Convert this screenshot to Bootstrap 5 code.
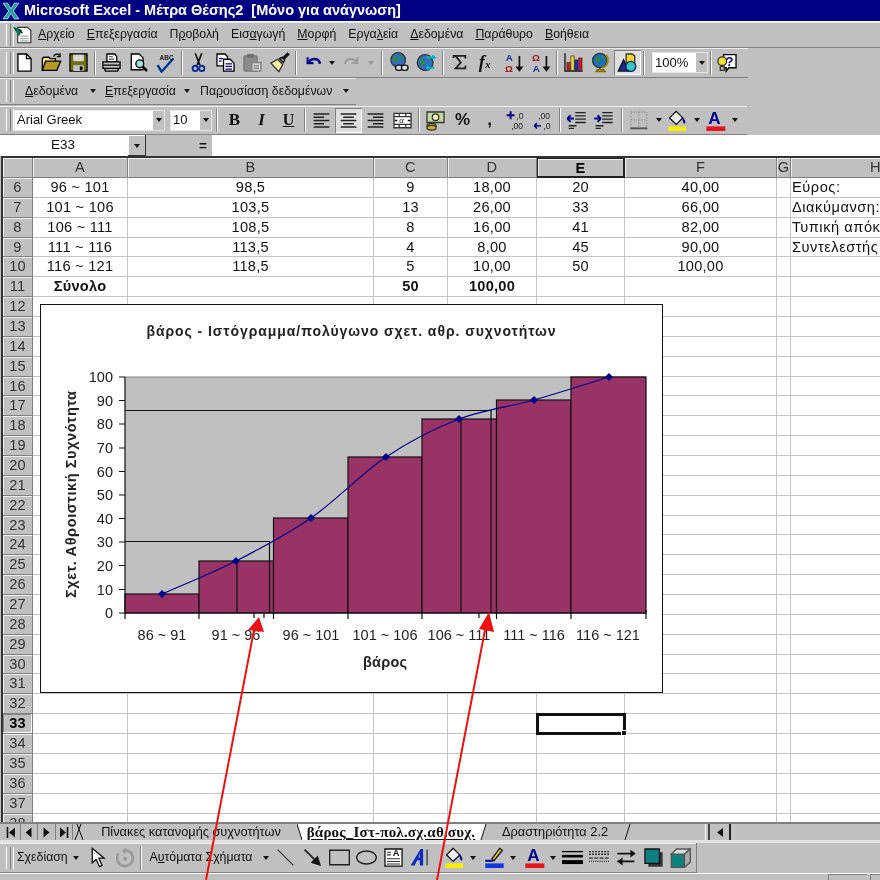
<!DOCTYPE html>
<html lang="el">
<head>
<meta charset="UTF-8">
<title>Microsoft Excel - Μέτρα Θέσης2</title>
<link href="https://cdn.jsdelivr.net/npm/bootstrap@5.3.0/dist/css/bootstrap.min.css" rel="stylesheet">
<style>
  html, body { margin: 0; background: #c0c0c0; }
  .xl-app { position: relative; width: 880px; height: 880px; overflow: hidden; font-family: "Liberation Sans", Arial, sans-serif; font-size: 12.3px; color: #111; background: #c0c0c0; filter: blur(.35px); }
  .xl-title { height: 22px; background: #000080; border-bottom: 1px solid #fff; color: #fff; font-weight: 700; font-size: 14.5px; padding-left: 2px; white-space: pre; }
  .xl-title svg { width: 18px; height: 18px; flex: none; }
  .xl-menu { height: 26px; border-bottom: 1px solid #808080; box-shadow: inset 0 1px 0 #e8e8e8; }
  .xl-menu span { padding: 0 6px; white-space: nowrap; }
  .xl-menu svg { width: 19px; height: 20px; margin-left: 2px; flex: none; }
  .xl-tools { height: 30px; border-bottom: 1px solid #808080; box-shadow: inset 0 1px 0 #efefef; }
  .xl-tools.xl-w1 { width: 748px; }
  .xl-rowband { height: 28px; }
  .xl-tools.xl-w2 { width: 356px; height: 27px; }
  .xl-band3 { height: 29px; }
  .xl-tools.xl-w3 { width: 747px; height: 29px; }
  .xl-handle { width: 5px; height: 22px; margin-left: 6px; border-left: 1px solid #fff; border-right: 1px solid #808080; box-shadow: 2px 0 0 #c0c0c0, 3px 0 0 #fff; flex: none; }
  .xl-btn { width: 27px; height: 25px; flex: none; display: flex; align-items: center; justify-content: center; }
  .xl-btn svg { width: 21px; height: 21px; display: block; }
  .xl-on { background: #dedede; box-shadow: inset 1px 1px 0 #808080, inset -1px -1px 0 #fff; }
  .xl-drop { width: 11px; height: 25px; flex: none; display: flex; align-items: center; justify-content: center; }
  .xl-caret { width: 0; height: 0; border-left: 3.5px solid transparent; border-right: 3.5px solid transparent; border-top: 4px solid #111; flex: none; }
  .xl-caret.xl-off { border-top-color: #999; }
  .xl-sep { width: 6px; height: 24px; flex: none; }
  .xl-sep::after { content: ""; display: block; width: 2px; height: 24px; margin: 0 auto; border-left: 1px solid #808080; border-right: 1px solid #fff; }
  .xl-sep-w { width: 9px; }
  .xl-gap2 { width: 2px; flex: none; }
  .xl-gap5 { width: 5px; flex: none; }
  .xl-undo { width: 28px; }
  .xl-undo + .xl-drop { width: 10px; }
  .xl-redo + .xl-drop { width: 12px; }
  .xl-combo { height: 21px; background: #fff; flex: none; display: flex; align-items: center; justify-content: space-between; padding-left: 3px; box-shadow: inset 0 0 0 1px #e6e6e6; font-size: 13px; }
  .xl-combo-font { width: 151px; margin-left: 3px; }
  .xl-combo-size { width: 42px; }
  .xl-combo-zoom { width: 56px; margin-left: 5px; }
  .xl-combo i { width: 11px; height: 19px; margin-right: 1px; background: #c0c0c0; display: flex; align-items: center; justify-content: center; }
  .xl-tb-b { font-family: "Liberation Serif", serif; font-size: 17px; }
  .xl-tb-i { font-family: "Liberation Serif", serif; font-size: 17px; font-style: italic; }
  .xl-tb-u { font-family: "Liberation Serif", serif; font-size: 16px; text-decoration: underline; }
  .xl-tb-pc { font-size: 17px; }
  .xl-pv { height: 25px; flex: none; display: flex; align-items: center; justify-content: space-between; white-space: nowrap; }
  .xl-pv1 { width: 94px; padding: 0 9.5px 0 14px; }
  .xl-pv2 { width: 95px; padding-right: 10.5px; }
  .xl-pv3 { width: 155px; padding-right: 6.5px; }
  .xl-dl1 { width: 72.5px; padding: 0 5px 0 6px; }
  .xl-dl2 { width: 128px; padding: 0 3px 0 6px; }
  .xl-formula { height: 21px; background: #fff; font-size: 13.5px; }
  .xl-namebox { width: 128px; flex: none; text-align: center; padding-right: 2px; }
  .xl-namedrop { width: 18px; height: 21px; flex: none; background: #c0c0c0; display: flex; align-items: center; justify-content: center; box-shadow: inset -1px -1px 0 #333, inset 1px 1px 0 #fff; }
  .xl-eq { width: 66px; height: 21px; flex: none; background: #c0c0c0; text-align: right; padding-right: 5px; font-weight: 700; line-height: 21px; }
  .xl-sheet { display: grid; grid-template-columns: 30px 95px 246px 74px 89px 88px 152px 14px 170px; grid-template-rows: 20px; grid-auto-rows: 19.86px; height: 666px; margin-left: 1px; overflow: hidden; background: #fff; border-left: 2px solid #333; border-top: 2px solid #333; font-size: 14.6px; letter-spacing: .25px; }
  .xl-cell { border-right: 1px solid #c4c4c4; border-bottom: 1px solid #c4c4c4; text-align: center; white-space: nowrap; line-height: 19px; min-width: 0; }
  .xl-left { text-align: left; padding-left: 1px; letter-spacing: .55px; }
  .xl-head { background: #c0c0c0; border-right: 1px solid #808080; border-bottom: 1px solid #808080; box-shadow: inset 1px 1px 0 #eee; text-align: center; line-height: 19px; color: #333; }
  .xl-head-sel { font-weight: 700; color: #000; border-right: 2px solid #222; border-bottom: 2px solid #222; border-left: 1px solid #222; border-top: 1px solid #222; }
  .xl-rowhead-sel { font-weight: 700; color: #000; box-shadow: inset -1px -1px 0 #fff, inset 1px 1px 0 #888; }
  .xl-bold { font-weight: 700; }
  .xl-sel { position: relative; outline: 3px solid #111; outline-offset: -2px; }
  .xl-sel::after { content: ""; position: absolute; right: -3px; bottom: -3px; width: 6px; height: 6px; background: #111; border: 1px solid #fff; }
  .xl-tabs { height: 18px; background: #c0c0c0; border-top: 2px solid #808080; overflow: hidden; font-size: 12.8px; }
  .xl-nav { width: 17.5px; height: 16px; flex: none; display: flex; align-items: center; justify-content: center; border-right: 1px solid #808080; }
  .xl-nav:first-child { margin-left: 3px; }
  .xl-nav svg { width: 11px; height: 13px; }
  .xl-slant { width: 12px; height: 16px; flex: none; display: block; }
  .xl-slant-n { width: 5px; }
  .xl-slant-m { width: 7px; }
  .xl-tab { flex: none; text-align: center; white-space: nowrap; line-height: 16px; height: 16px; }
  .xl-tab1 { width: 212px; }
  .xl-tab2 { width: 178px; background: #fff; font-weight: 700; font-family: "Liberation Serif", "Liberation Sans", serif; font-size: 15px; letter-spacing: .2px; }
  .xl-tab2 u { text-underline-offset: 2px; }
  .xl-tab3 { width: 136px; }
  .xl-tabfill { width: 70px; flex: none; height: 16px; }
  .xl-split { width: 5px; height: 16px; flex: none; border-left: 1px solid #fff; border-right: 2px solid #444; }
  .xl-scrollbtn { width: 21px; height: 16px; flex: none; display: flex; align-items: center; justify-content: center; border-right: 2px solid #222; }
  .xl-band { height: 3px; background: #e2e2e2; }
  .xl-tools.xl-w4 { width: 697px; height: 30px; border-right: 1px solid #808080; }
  .xl-status { height: 7px; border-top: 1px solid #fff; justify-content: flex-end; }
  .xl-status b { display: block; width: 39px; margin-right: 3px; border-top: 1px solid #808080; border-left: 1px solid #808080; }
  .xl-status b:last-child { width: 10px; margin-right: 0; }
  .xl-chart { position: absolute; left: 40px; top: 304px; width: 623px; height: 389px; background: #fff; }
  .xl-arrows { position: absolute; left: 0; top: 0; width: 880px; height: 880px; pointer-events: none; }
  .xl-chart text { font-family: "Liberation Sans", Arial, sans-serif; fill: #222; }
  .xl-stroke { fill: none; stroke: #111; }
</style>
</head>
<body>

<!-- icon sprite, icons holding letters are written inline at their place -->
<svg width="0" height="0" class="d-block">
  <symbol id="i-new" viewBox="0 0 16 16"><path d="M3 1.5h6.5L13 5v9.5H3z" fill="#fff" stroke="#000"/><path d="M9.5 1.5V5H13" fill="none" stroke="#000"/></symbol>
  <symbol id="i-open" viewBox="0 0 16 16"><path d="M1 14V5l1-1h4l1 1h4v2" fill="#f6e27a" stroke="#000"/><path d="M1 14l2.5-7H15l-3 7z" fill="#b79a26" stroke="#000"/><path d="M9.5 3.5c1-2 3-2.5 4.5-1" fill="none" stroke="#000"/><path d="M14.5 1v2.500H12" fill="none" stroke="#000"/></symbol>
  <symbol id="i-save" viewBox="0 0 16 16"><path d="M1.5 1.5h13v13h-13z" fill="#6f6f18" stroke="#000"/><path d="M4 2h8v5H4z" fill="#d8d8d8"/><path d="M4 10h8v4.5H4z" fill="#c0c0c0"/><path d="M9 11h2v3H9z" fill="#000"/></symbol>
  <symbol id="i-print" viewBox="0 0 16 16"><path d="M4.5 1.5h6l1.5 2v4H4.5z" fill="#fff" stroke="#000"/><path d="M1.5 7.5h13v5h-13z" fill="#bdbdbd" stroke="#000"/><path d="M2 10h12M3 14.5h10M3 12.5v2M13 12.5v2" stroke="#000"/><path d="M6 3.5h3M6 5.5h4" stroke="#666"/></symbol>
  <symbol id="i-preview" viewBox="0 0 16 16"><path d="M2.5 1.5h6l3 3v9h-9z" fill="#fff" stroke="#000"/><circle cx="9" cy="9" r="3" fill="#9fe0e0" stroke="#000"/><path d="M11 11l3.5 3.5" stroke="#000" stroke-width="2"/></symbol>
  <symbol id="i-cut" viewBox="0 0 16 16"><path d="M5.5 1L9 10M10.5 1L7 10" stroke="#111" stroke-width="1.3"/><circle cx="5.500" cy="12.500" r="2" fill="none" stroke="#0c2c9c" stroke-width="1.4"/><circle cx="10.500" cy="12.500" r="2" fill="none" stroke="#0c2c9c" stroke-width="1.4"/></symbol>
  <symbol id="i-copy" viewBox="0 0 16 16"><path d="M1.5 1.5h6l2 2v7h-8z" fill="#fff" stroke="#000"/><path d="M6.5 5.500h5l3 3v6h-8z" fill="#fff" stroke="#000"/><path d="M8 9h5M8 11h5M8 13h5M3 5h3M3 7h2" stroke="#00008b"/></symbol>
  <symbol id="i-paste" viewBox="0 0 16 16"><rect x="1.5" y="3" width="10" height="11.5" rx="1" fill="#8c8c8c" stroke="#777"/><rect x="4" y="1.5" width="5" height="3" fill="#6f6f6f"/><path d="M7.5 8h7v6.5h-7z" fill="#d0d0d0" stroke="#808080"/><path d="M9 10.5h4M9 12.5h4" stroke="#808080"/></symbol>
  <symbol id="i-painter" viewBox="0 0 16 16"><path d="M1.5 8.500l5-3 4 4-3 5.500z" fill="#f7f2a0" stroke="#333"/><path d="M8 5l2-1 2 2-1 2z" fill="#ddd" stroke="#000"/><path d="M10.5 5.500L15 1" stroke="#111" stroke-width="2.4"/></symbol>
  <symbol id="i-undo" viewBox="0 0 16 16"><path d="M3.5 4v4.500H8" fill="none" stroke="#00008b" stroke-width="1.6"/><path d="M3.5 8.500C6 4.500 12 4 13 9" fill="none" stroke="#00008b" stroke-width="1.8"/></symbol>
  <symbol id="i-redo" viewBox="0 0 16 16"><path d="M12.5 4v4.500H8" fill="none" stroke="#9a9a9a" stroke-width="1.4"/><path d="M12.5 8.500C10 4.500 4 4 3 9" fill="none" stroke="#9a9a9a" stroke-width="1.6"/></symbol>
  <symbol id="i-link" viewBox="0 0 16 16"><circle cx="7" cy="6" r="5.500" fill="#2f6fc0" stroke="#333"/><path d="M3 3l3 1 1 3-3 1zM8 2l3 2-2 2z" fill="#2f8a3a"/><rect x="5" y="10" width="5" height="4" rx="2" fill="#ddd" stroke="#111"/><rect x="9.5" y="10" width="5" height="4" rx="2" fill="#ddd" stroke="#111"/></symbol>
  <symbol id="i-web" viewBox="0 0 16 16"><circle cx="7" cy="8" r="6" fill="#2f6fc0" stroke="#333"/><path d="M3 5l3 1 1 3-3 2zM8 3l3 2-2 2z" fill="#2f8a3a"/><path d="M8 4h6l-1.5-1.5M14 4l-1.5 1.5M8 12h6M8 12l1.5-1.5M8 12l1.5 1.5" stroke="#00b4d8" stroke-width="1.4" fill="none"/></symbol>
  <symbol id="i-sigma" viewBox="0 0 16 16"><path d="M3.5 4.5V3h9v2M12.5 3H5l4 5-4 4.500h7.500v-2" fill="none" stroke="#222" stroke-width="1.4"/></symbol>
  <symbol id="i-chart" viewBox="0 0 16 16"><path d="M1.5 1v13.500H15" fill="none" stroke="#111"/><path d="M3 8h2.500v6H3z" fill="#d41c1c" stroke="#222" stroke-width=".5"/><path d="M6 3h2.500v11H6z" fill="#f5e02a" stroke="#222" stroke-width=".5"/><path d="M9 6h2.500v8H9z" fill="#1a2ac0" stroke="#222" stroke-width=".5"/><path d="M12 4.500h2.500V14H12z" fill="#d41c1c" stroke="#222" stroke-width=".5"/></symbol>
  <symbol id="i-map" viewBox="0 0 16 16"><circle cx="7.5" cy="6.500" r="5.500" fill="#1f6cc4" stroke="#333"/><path d="M4 3l3 1 1 3-3 2zM9 2l3 2-1 3z" fill="#2f8a3a"/><path d="M12 2c3 3 2 9-3 10" fill="none" stroke="#a08a10" stroke-width="1.4"/><path d="M7.5 12v1.500M4.5 15h7l-1-1.500h-5z" fill="#d8c020" stroke="#7a6a00"/></symbol>
  <symbol id="i-draw" viewBox="0 0 16 16"><path d="M7 1.5h4.500l2 1.500v6H9L7 7.500z" fill="#f5d82a" stroke="#333"/><path d="M1 14.500L5 6l4 8.500z" fill="#1a2a9c" stroke="#111"/><circle cx="10.5" cy="11" r="3.8" fill="#35c7c7" stroke="#125"/></symbol>
  <symbol id="i-left" viewBox="0 0 16 16"><path d="M2 3h12M2 5.500h8M2 8h12M2 10.500h8M2 13h12" stroke="#222" stroke-width="1.1"/></symbol>
  <symbol id="i-center" viewBox="0 0 16 16"><path d="M2 3h12M4 5.500h8M2 8h12M4 10.500h8M2 13h12" stroke="#222" stroke-width="1.1"/></symbol>
  <symbol id="i-right" viewBox="0 0 16 16"><path d="M2 3h12M6 5.500h8M2 8h12M6 10.500h8M2 13h12" stroke="#222" stroke-width="1.1"/></symbol>
  <symbol id="i-money" viewBox="0 0 16 16"><path d="M1.5 1.5h13v8h-13z" fill="#c2d9a0" stroke="#333"/><circle cx="8" cy="5.500" r="2.500" fill="#f1f1b0" stroke="#333"/><ellipse cx="5" cy="12" rx="3.5" ry="1.8" fill="#d8b020" stroke="#333"/><ellipse cx="5" cy="13.500" rx="3.5" ry="1.8" fill="#d8b020" stroke="#333"/></symbol>
  <symbol id="i-indl" viewBox="0 0 16 16"><path d="M7 2h8M7 4.500h8M7 7h8M7 9.500h8M2 12h6M2 14h4" stroke="#222"/><path d="M1 6.500h5M1 6.500L3.500 4M1 6.500L3.500 9" fill="none" stroke="#00008b" stroke-width="1.4"/></symbol>
  <symbol id="i-indr" viewBox="0 0 16 16"><path d="M7 2h8M7 4.500h8M7 7h8M7 9.500h8M2 12h6M2 14h4" stroke="#222"/><path d="M1 6.500h5M6 6.500L3.500 4M6 6.500L3.500 9" fill="none" stroke="#00008b" stroke-width="1.4"/></symbol>
  <symbol id="i-border" viewBox="0 0 16 16"><path d="M1.500 1.500h12v12h-12zM7.500 1.500v12M1.500 7.500h12" fill="none" stroke="#999" stroke-dasharray="1 1"/><path d="M1 14h13" stroke="#555" stroke-width="1.4"/></symbol>
  <symbol id="i-fill" viewBox="0 0 16 16"><path d="M7 1L2 6l5 5 5-5z" fill="#eee" stroke="#111"/><path d="M11 5c2 1 3 3 3 4.500 0 1-1.500 1-1.500 0z" fill="#00008b"/><path d="M1 12.500h13.500V16H1z" fill="#f8f000"/></symbol>
  <symbol id="i-pen" viewBox="0 0 16 16"><path d="M6 9l6-8 2 1.500-6.500 8z" fill="#ecd53a" stroke="#111"/><path d="M1 10.500h6" stroke="#00008b" stroke-width="1.5"/><path d="M1 12.500h14V16H1z" fill="#1035e0"/></symbol>
  <symbol id="i-cursor" viewBox="0 0 16 16"><path d="M4 1v11l3-2.500L9.500 15l2-1L9 8.500h4z" fill="#fff" stroke="#111"/></symbol>
  <symbol id="i-rotate" viewBox="0 0 16 16"><path d="M3.500 5a6 6 0 1 0 5-2.500" fill="none" stroke="#999" stroke-width="2"/><path d="M9 .5v5L6 3z" fill="#999"/><circle cx="8.500" cy="9" r="1.5" fill="#999"/></symbol>
  <symbol id="i-line" viewBox="0 0 16 16"><path d="M2 2l12 12" stroke="#333"/></symbol>
  <symbol id="i-arrow" viewBox="0 0 16 16"><path d="M2 2l9 9" stroke="#222" stroke-width="1.3"/><path d="M14.500 14.500L6.500 12l5.500-5.500z" fill="#111"/></symbol>
  <symbol id="i-rect" viewBox="0 0 16 16"><path d="M.5 2.500h15v11H.5z" fill="none" stroke="#222" stroke-width="1.1"/></symbol>
  <symbol id="i-ellipse" viewBox="0 0 16 16"><ellipse cx="8" cy="8" rx="7.5" ry="5" fill="none" stroke="#222" stroke-width="1.1"/></symbol>
  <symbol id="i-wordart" viewBox="0 0 16 16"><path d="M.5 14L8 1.500h2V14H7.500V10h-2L3.500 14zM6.500 8h1V4.500z" fill="#0a2ac0" fill-rule="evenodd"/><path d="M13 2v12" stroke="#666" stroke-width="1.5"/></symbol>
  <symbol id="i-lines" viewBox="0 0 16 16"><path d="M0 3.500h16" stroke="#000"/><path d="M0 7h16" stroke="#000" stroke-width="2"/><path d="M0 11.500h16" stroke="#000" stroke-width="3"/></symbol>
  <symbol id="i-dash" viewBox="0 0 16 16"><path d="M0 3.500h16M0 5.500h16" stroke="#333" stroke-dasharray="1.5 .8"/><path d="M0 8.500h16" stroke="#333" stroke-dasharray="3 1"/><path d="M0 11h16" stroke="#333" stroke-dasharray=".8 .8"/></symbol>
  <symbol id="i-arrows" viewBox="0 0 16 16"><path d="M1 5h13M1 11h13" stroke="#111" stroke-width="1.3"/><path d="M15 5l-4-3v6zM1 11l4-3v6z" fill="#111"/></symbol>
  <symbol id="i-shadow" viewBox="0 0 16 16"><path d="M4 4h11v11H4z" fill="#333"/><path d="M1.500 1.500h11v11h-11z" fill="#0d8080" stroke="#111"/></symbol>
  <symbol id="i-3d" viewBox="0 0 16 16"><path d="M1 5.500h10v10H1z" fill="#0d8080" stroke="#555"/><path d="M1 5.500L5 1.500h10.500l-4.500 4z" fill="#ddd" stroke="#555"/><path d="M11 5.500l4.500-4v10l-4.500 4z" fill="#aaa" stroke="#555"/></symbol>
  <symbol id="i-excel" viewBox="0 0 16 16"><path d="M1 1h4l3 5 3-5h4l-5 7 5 7h-4l-3-5-3 5H1l5-7z" fill="#19a0a0" stroke="#e8ffff" stroke-width=".6"/></symbol>
  <symbol id="i-doc" viewBox="0 0 16 16"><path d="M4 1.500h8l3 2.500v10.500H4z" fill="#fff" stroke="#333"/><path d="M6 9h7M6 11h7M6 13h7" stroke="#aaa"/><path d="M1 2l6 2-2 4z" fill="#0d8080" stroke="#063"/><path d="M5 3.500l3 3" stroke="#111"/></symbol>
</svg>

<div class="xl-app">
  <!-- title bar -->
  <div class="xl-title d-flex align-items-center"><svg class="me-1"><use href="#i-excel"/></svg>Microsoft Excel - Μέτρα Θέσης2  [Μόνο για ανάγνωση]</div>

  <!-- menu -->
  <div class="xl-menu d-flex align-items-center">
    <div class="xl-handle"></div>
    <svg><use href="#i-doc"/></svg>
    <span><u>Α</u>ρχείο</span>
    <span><u>Ε</u>πεξεργασία</span>
    <span>Π<u>ρ</u>οβολή</span>
    <span>Εισ<u>α</u>γωγή</span>
    <span><u>Μ</u>ορφή</span>
    <span>Εργα<u>λ</u>εία</span>
    <span><u>Δ</u>εδομένα</span>
    <span><u>Π</u>αράθυρο</span>
    <span><u>Β</u>οήθεια</span>
  </div>

  <!-- standard toolbar -->
  <div class="xl-tools xl-w1 d-flex align-items-center">
    <div class="xl-handle"></div>
    <div class="xl-btn"><svg><use href="#i-new"/></svg></div>
    <div class="xl-btn"><svg><use href="#i-open"/></svg></div>
    <div class="xl-btn"><svg><use href="#i-save"/></svg></div>
    <div class="xl-sep"></div>
    <div class="xl-btn"><svg><use href="#i-print"/></svg></div>
    <div class="xl-btn"><svg><use href="#i-preview"/></svg></div>
    <div class="xl-btn"><svg viewBox="0 0 16 16"><text x="3.5" y="6" font-family="Liberation Sans" font-size="5" font-weight="700" fill="#222">ABC</text><path d="M2 10l3 5L14 5" fill="none" stroke="#00329b" stroke-width="1.8"/></svg></div>
    <div class="xl-sep"></div>
    <div class="xl-btn"><svg><use href="#i-cut"/></svg></div>
    <div class="xl-btn"><svg><use href="#i-copy"/></svg></div>
    <div class="xl-btn"><svg><use href="#i-paste"/></svg></div>
    <div class="xl-btn"><svg><use href="#i-painter"/></svg></div>
    <div class="xl-sep"></div>
    <div class="xl-btn xl-undo"><svg><use href="#i-undo"/></svg></div>
    <div class="xl-drop"><div class="xl-caret"></div></div>
    <div class="xl-btn xl-undo xl-redo"><svg><use href="#i-redo"/></svg></div>
    <div class="xl-drop"><div class="xl-caret xl-off"></div></div>
    <div class="xl-sep xl-sep-w"></div>
    <div class="xl-btn"><svg><use href="#i-link"/></svg></div>
    <div class="xl-btn"><svg><use href="#i-web"/></svg></div>
    <div class="xl-sep"></div>
    <div class="xl-btn"><svg><use href="#i-sigma"/></svg></div>
    <div class="xl-btn"><svg viewBox="0 0 16 16"><text x="2" y="12" font-family="Liberation Serif" font-size="14" font-style="italic" font-weight="700" fill="#111">f</text><text x="7" y="12" font-family="Liberation Serif" font-size="8" font-style="italic" font-weight="700" fill="#111">x</text></svg></div>
    <div class="xl-btn"><svg viewBox="0 0 16 16"><text x="2" y="7" font-family="Liberation Sans" font-size="7.5" font-weight="700" fill="#1a2a9c">Α</text><text x="1.5" y="15" font-family="Liberation Sans" font-size="7.5" font-weight="700" fill="#a01616">Ω</text><path d="M12.500 3v10" stroke="#111" stroke-width="1.3"/><path d="M9.500 11l3 4 3-4z" fill="#111"/></svg></div>
    <div class="xl-btn"><svg viewBox="0 0 16 16"><text x="1.5" y="7" font-family="Liberation Sans" font-size="7.5" font-weight="700" fill="#a01616">Ω</text><text x="2" y="15" font-family="Liberation Sans" font-size="7.5" font-weight="700" fill="#1a2a9c">Α</text><path d="M12.500 3v10" stroke="#111" stroke-width="1.3"/><path d="M9.500 11l3 4 3-4z" fill="#111"/></svg></div>
    <div class="xl-sep"></div>
    <div class="xl-btn"><svg><use href="#i-chart"/></svg></div>
    <div class="xl-btn"><svg><use href="#i-map"/></svg></div>
    <div class="xl-btn xl-on"><svg><use href="#i-draw"/></svg></div>
    <div class="xl-sep"></div>
    <div class="xl-combo xl-combo-zoom">100%<i><span class="xl-caret"></span></i></div>
    <div class="xl-sep"></div>
    <div class="xl-btn"><svg viewBox="0 0 16 16"><path d="M5 2h9.500v10H9l-2 2.500V12H5z" fill="#fff" stroke="#000"/><circle cx="4" cy="7" r="3.3" fill="#f6e02a" stroke="#333"/><path d="M2.500 11h3v3h-3z" fill="#bbb" stroke="#333"/><text x="6.500" y="10.500" font-family="Liberation Sans" font-size="10" font-weight="700" fill="#00008b">?</text></svg></div>
  </div>

  <!-- pivot table toolbar -->
  <div class="xl-rowband">
    <div class="xl-tools xl-w2 d-flex align-items-center">
      <div class="xl-handle"></div>
      <div class="xl-pv xl-pv1"><span><u>Δ</u>εδομένα</span><div class="xl-caret"></div></div>
      <div class="xl-pv xl-pv2"><span><u>Ε</u>πεξεργασία</span><div class="xl-caret"></div></div>
      <div class="xl-pv xl-pv3"><span>Πα<u>ρ</u>ουσίαση δεδομένων</span><div class="xl-caret"></div></div>
    </div>
  </div>

  <!-- formatting toolbar -->
  <div class="xl-band3">
    <div class="xl-tools xl-w3 d-flex align-items-center">
      <div class="xl-handle"></div>
      <div class="xl-combo xl-combo-font">Arial Greek<i><span class="xl-caret"></span></i></div>
      <div class="xl-gap5"></div>
      <div class="xl-combo xl-combo-size">10<i><span class="xl-caret"></span></i></div>
      <div class="xl-sep xl-sep-w"></div>
      <div class="xl-btn"><b class="xl-tb-b">B</b></div>
      <div class="xl-btn"><b class="xl-tb-i">I</b></div>
      <div class="xl-btn"><b class="xl-tb-u">U</b></div>
      <div class="xl-sep"></div>
      <div class="xl-btn"><svg><use href="#i-left"/></svg></div>
      <div class="xl-btn xl-on"><svg><use href="#i-center"/></svg></div>
      <div class="xl-btn"><svg><use href="#i-right"/></svg></div>
      <div class="xl-btn"><svg viewBox="0 0 16 16"><path d="M1.500 2.500h13v11h-13zM1.500 5h13M1.500 11h13" fill="#fff" stroke="#333"/><path d="M5.500 2.500V5M10.500 2.500V5M5.500 11v2.500M10.500 11v2.500" stroke="#333"/><text x="5.500" y="10" font-family="Liberation Serif" font-size="6.500" font-style="italic" fill="#111">α</text><path d="M2 8h2M14 8h-2" stroke="#111"/></svg></div>
      <div class="xl-sep"></div>
      <div class="xl-btn"><svg><use href="#i-money"/></svg></div>
      <div class="xl-btn"><b class="xl-tb-pc">%</b></div>
      <div class="xl-btn"><b class="xl-tb-pc">,</b></div>
      <div class="xl-btn"><svg viewBox="0 0 16 16"><text x="8" y="7" font-family="Liberation Sans" font-size="6.5" fill="#222">,0</text><text x="4" y="14.5" font-family="Liberation Sans" font-size="6.5" fill="#222">,00</text><path d="M3.500 1v6M.5 4h6" stroke="#00008b" stroke-width="1.5"/></svg></div>
      <div class="xl-btn"><svg viewBox="0 0 16 16"><text x="4" y="7" font-family="Liberation Sans" font-size="6.5" fill="#222">,00</text><text x="8" y="14.5" font-family="Liberation Sans" font-size="6.5" fill="#222">,0</text><path d="M1 12h5M1 12l2-2M1 12l2 2" fill="none" stroke="#00008b" stroke-width="1.3"/></svg></div>
      <div class="xl-sep"></div>
      <div class="xl-btn"><svg><use href="#i-indl"/></svg></div>
      <div class="xl-btn"><svg><use href="#i-indr"/></svg></div>
      <div class="xl-sep xl-sep-w"></div>
      <div class="xl-btn"><svg><use href="#i-border"/></svg></div>
      <div class="xl-drop"><div class="xl-caret"></div></div>
      <div class="xl-btn"><svg><use href="#i-fill"/></svg></div>
      <div class="xl-drop"><div class="xl-caret"></div></div>
      <div class="xl-btn"><svg viewBox="0 0 16 16"><text x="2.500" y="11" font-family="Liberation Sans" font-size="13" font-weight="700" fill="#00008b">A</text><path d="M1 12.500h14.500V16H1z" fill="#e8141c"/></svg></div>
      <div class="xl-drop"><div class="xl-caret"></div></div>
    </div>
  </div>

  <!-- formula bar -->
  <div class="xl-formula d-flex align-items-center">
    <div class="xl-namebox">E33</div>
    <div class="xl-namedrop"><div class="xl-caret"></div></div>
    <div class="xl-eq">=</div>
  </div>

  <!-- worksheet -->
  <div class="xl-sheet" id="sheet"></div>

  <!-- sheet tabs -->
  <div class="xl-tabs d-flex align-items-start">
    <div class="xl-nav"><svg viewBox="0 0 11 13"><path d="M1.500 1v11" stroke="#111" stroke-width="1.6"/><path d="M9 1.500L3 6.500l6 5z" fill="#111"/></svg></div>
    <div class="xl-nav"><svg viewBox="0 0 11 13"><path d="M8.500 1.500L2.500 6.500l6 5z" fill="#111"/></svg></div>
    <div class="xl-nav"><svg viewBox="0 0 11 13"><path d="M2.500 1.500l6 5-6 5z" fill="#111"/></svg></div>
    <div class="xl-nav"><svg viewBox="0 0 11 13"><path d="M9.500 1v11" stroke="#111" stroke-width="1.6"/><path d="M2 1.500l6 5-6 5z" fill="#111"/></svg></div>
    <svg class="xl-slant" viewBox="0 0 12 16"><path d="M8 0L2 16M4 0l6 16" class="xl-stroke"/></svg>
    <div class="xl-tab xl-tab1">Πίνακες κατανομής συχνοτήτων</div>
    <svg class="xl-slant xl-slant-n" viewBox="0 0 5 16"><path d="M0 0l5 16V0z" fill="#fff"/><path d="M0 0l5 16" class="xl-stroke"/></svg>
    <div class="xl-tab xl-tab2"><u>βάρος_Ιστ-πολ.σχ.αθ.συχ.</u></div>
    <svg class="xl-slant xl-slant-m" viewBox="0 0 7 16"><path d="M0 0h6L1 16H0z" fill="#fff"/><path d="M6 0L1 16" class="xl-stroke"/></svg>
    <div class="xl-tab xl-tab3">Δραστηριότητα 2.2</div>
    <svg class="xl-slant" viewBox="0 0 12 16"><path d="M7 0L2 16" class="xl-stroke"/></svg>
    <div class="xl-tabfill"></div>
    <div class="xl-split"></div>
    <div class="xl-scrollbtn"><svg width="8" height="11" viewBox="0 0 8 11"><path d="M7 1L1 5.500l6 4.500z" fill="#111"/></svg></div>
  </div>
  <div class="xl-band"></div>

  <!-- drawing toolbar -->
  <div class="xl-tools xl-w4 d-flex align-items-center">
    <div class="xl-handle"></div>
    <div class="xl-pv xl-dl1"><span>Σ<u>χ</u>εδίαση</span><div class="xl-caret"></div></div>
    <div class="xl-btn"><svg><use href="#i-cursor"/></svg></div>
    <div class="xl-btn"><svg><use href="#i-rotate"/></svg></div>
    <div class="xl-sep"></div>
    <div class="xl-pv xl-dl2"><span>Α<u>υ</u>τόματα Σχήματα</span><div class="xl-caret"></div></div>
    <div class="xl-btn"><svg><use href="#i-line"/></svg></div>
    <div class="xl-btn"><svg><use href="#i-arrow"/></svg></div>
    <div class="xl-btn"><svg><use href="#i-rect"/></svg></div>
    <div class="xl-btn"><svg><use href="#i-ellipse"/></svg></div>
    <div class="xl-btn"><svg viewBox="0 0 16 16"><path d="M1.500 1.500h13v13h-13z" fill="#fff" stroke="#111"/><text x="7.500" y="7" font-family="Liberation Sans" font-size="7" font-weight="700" fill="#111">A</text><path d="M3 4h3M3 6h3M3 9h10M3 11h10M3 13h10" stroke="#333" stroke-width=".8"/></svg></div>
    <div class="xl-btn"><svg><use href="#i-wordart"/></svg></div>
    <div class="xl-gap5"></div><div class="xl-gap2"></div>
    <div class="xl-btn"><svg><use href="#i-fill"/></svg></div>
    <div class="xl-drop"><div class="xl-caret"></div></div>
    <div class="xl-gap2"></div>
    <div class="xl-btn"><svg><use href="#i-pen"/></svg></div>
    <div class="xl-drop"><div class="xl-caret"></div></div>
    <div class="xl-gap2"></div>
    <div class="xl-btn"><svg viewBox="0 0 16 16"><text x="2.500" y="11" font-family="Liberation Sans" font-size="13" font-weight="700" fill="#00008b">A</text><path d="M1 12.500h14.500V16H1z" fill="#e8141c"/></svg></div>
    <div class="xl-drop"><div class="xl-caret"></div></div>
    <div class="xl-btn"><svg><use href="#i-lines"/></svg></div>
    <div class="xl-btn"><svg><use href="#i-dash"/></svg></div>
    <div class="xl-btn"><svg><use href="#i-arrows"/></svg></div>
    <div class="xl-btn"><svg><use href="#i-shadow"/></svg></div>
    <div class="xl-btn"><svg><use href="#i-3d"/></svg></div>
  </div>
  <div class="xl-status d-flex"><b></b><b></b></div>

  <!-- embedded chart floats over the cells -->
  <svg class="xl-chart" viewBox="40 304 623 389">
    <rect x="40.5" y="304.5" width="622" height="388" fill="#fff" stroke="#111"/>
    <text x="351" y="336" text-anchor="middle" font-size="14" font-weight="700" textLength="409">βάρος - Ιστόγραμμα/πολύγωνο σχετ. αθρ. συχνοτήτων</text>
    <rect x="125" y="377" width="521" height="236" fill="#c0c0c0"/>
    <path d="M125 377h521" stroke="#808080"/>
    <g fill="#993366" stroke="#111" stroke-width="1.2">
      <rect x="125" y="594" width="74" height="19"/>
      <rect x="199" y="561" width="74.5" height="52"/>
      <rect x="273.5" y="518" width="74.5" height="95"/>
      <rect x="348" y="457" width="74" height="156"/>
      <rect x="422" y="419" width="74.5" height="194"/>
      <rect x="496.5" y="400" width="74.5" height="213"/>
      <rect x="571" y="377" width="75" height="236"/>
    </g>
    <!-- reading lines for the percentiles -->
    <g fill="none" stroke="#111" stroke-width="1.2">
      <path d="M125 541.5h144.5V613"/>
      <path d="M125 410.5h366V613"/>
      <path d="M237 561v52M461 419v194"/>
      <path d="M125 377v242M119 613h527"/>
      <path d="M119 377h6M119 400.5h6M119 424h6M119 448h6M119 471.5h6M119 495h6M119 518.5h6M119 542h6M119 565.5h6M119 589.5h6"/>
      <path d="M199 613v6M273.5 613v6M348 613v6M422 613v6M496.5 613v6M571 613v6M646 610v9M254 613v5M264 613v5M479 613v5"/>
    </g>
    <path d="M162 594C174.3 588.5 211.2 573.7 236 561S286 535.3 311 518 361.3 473.5 386 457 434.3 428.5 459 419 509 407 534 400 596.5 380.8 609 377" fill="none" stroke="#00008b" stroke-width="1.2"/>
    <path d="M162 590l4 4-4 4-4-4zM236 557l4 4-4 4-4-4zM311 514l4 4-4 4-4-4zM386 453l4 4-4 4-4-4zM459 415l4 4-4 4-4-4zM534 396l4 4-4 4-4-4zM609 373l4 4-4 4-4-4z" fill="#00008b"/>
    <g font-size="14.5" text-anchor="end">
      <text x="113" y="382">100</text><text x="113" y="405.5">90</text><text x="113" y="429">80</text><text x="113" y="453">70</text><text x="113" y="476.5">60</text>
      <text x="113" y="500">50</text><text x="113" y="523.5">40</text><text x="113" y="547">30</text><text x="113" y="570.5">20</text><text x="113" y="594.5">10</text><text x="113" y="618">0</text>
    </g>
    <g font-size="14.5" text-anchor="middle">
      <text x="162" y="640">86 ~ 91</text><text x="236" y="640">91 ~ 96</text><text x="311" y="640">96 ~ 101</text><text x="385" y="640">101 ~ 106</text>
      <text x="459" y="640">106 ~ 111</text><text x="534" y="640">111 ~ 116</text><text x="608" y="640">116 ~ 121</text>
    </g>
    <text x="385" y="667" text-anchor="middle" font-size="14.5" font-weight="700" textLength="44">βάρος</text>
    <text transform="translate(76 494.5) rotate(-90)" text-anchor="middle" font-size="14.5" font-weight="700" textLength="207">Σχετ. Αθροιστική Συχνότητα</text>
  </svg>

  <!-- red arrows drawn on top of the screenshot -->
  <svg class="xl-arrows" viewBox="0 0 880 880">
    <path d="M206 880L254 630M437 880L485 630" stroke="#ee1111" stroke-width="2" fill="none"/>
    <path d="M259 617l-11 13 16 2zM489 612l-10 17 15 3z" fill="#ee1111"/>
  </svg>
</div>

<script src="https://cdn.jsdelivr.net/npm/bootstrap@5.3.0/dist/js/bootstrap.bundle.min.js"></script>
<script>
  const cols = ['', 'A', 'B', 'C', 'D', 'E', 'F', 'G', 'H'];
  const data = {
    6: ['96 ~ 101', '98,5', '9', '18,00', '20', '40,00', '', 'Εύρος:'],
    7: ['101 ~ 106', '103,5', '13', '26,00', '33', '66,00', '', 'Διακύμανση:'],
    8: ['106 ~ 111', '108,5', '8', '16,00', '41', '82,00', '', 'Τυπική απόκλιση'],
    9: ['111 ~ 116', '113,5', '4', '8,00', '45', '90,00', '', 'Συντελεστής'],
    10: ['116 ~ 121', '118,5', '5', '10,00', '50', '100,00', '', ''],
    11: ['Σύνολο', '', '50', '100,00', '', '', '', '']
  };
  const sheet = document.getElementById('sheet');

  function addCell(text, cls) {
    const d = document.createElement('div');
    d.className = cls;
    d.textContent = text;
    sheet.appendChild(d);
  }

  cols.forEach(c => addCell(c, 'xl-head' + (c === 'E' ? ' xl-head-sel' : '')));
  for (let r = 6; r <= 38; r++) {
    addCell(r, 'xl-head' + (r === 33 ? ' xl-rowhead-sel' : ''));
    const vals = data[r] || ['', '', '', '', '', '', '', ''];
    vals.forEach((v, i) => {
      let cls = 'xl-cell';
      if (i === 7) cls += ' xl-left';
      if (r === 11) cls += ' xl-bold';
      if (r === 33 && i === 4) cls += ' xl-sel';
      addCell(v, cls);
    });
  }
</script>
</body>
</html>
